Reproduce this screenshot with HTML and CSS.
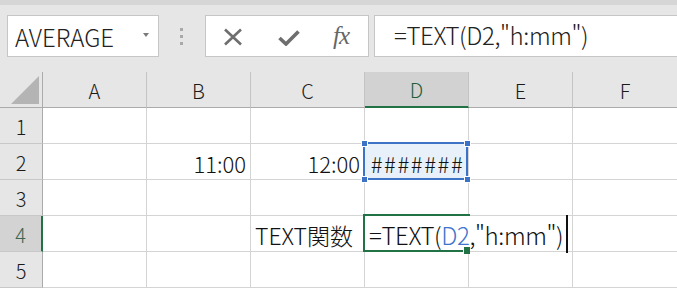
FILE: index.html
```html
<!DOCTYPE html>
<html lang="ja">
<head>
<meta charset="utf-8">
<title>Excel TEXT</title>
<link rel="stylesheet" href="styles.css">
</head>
<body>
<div class="app">
  <div class="topband"></div>
  <div class="toolbar">
    <div class="namebox">
      <span class="name">AVERAGE</span>
      <span class="dd"></span>
    </div>
    <div class="grip"><i></i><i></i><i></i></div>
    <div class="fbtns">
      <svg class="ic-x" width="20" height="18" viewBox="0 0 20 18"><path d="M2 1.5 L18 16.5 M18 1.5 L2 16.5" stroke="#6e6e6e" stroke-width="2.6" fill="none"/></svg>
      <svg class="ic-ok" width="22" height="16" viewBox="0 0 22 16"><path d="M1.5 8 L8 14 L20.5 1.5" stroke="#6e6e6e" stroke-width="3.6" fill="none" stroke-linejoin="miter"/></svg>
      <span class="fx">fx</span>
    </div>
    <div class="finput">=TEXT(D2,"h:mm")</div>
  </div>
  <div class="sheet">
    <div class="corner"><span class="tri"></span></div>
    <div class="ch">A</div>
    <div class="ch">B</div>
    <div class="ch">C</div>
    <div class="ch sel">D</div>
    <div class="ch">E</div>
    <div class="ch last">F</div>

    <div class="rh">1</div>
    <div class="c"></div><div class="c"></div><div class="c"></div><div class="c"></div><div class="c"></div><div class="c last"></div>

    <div class="rh">2</div>
    <div class="c"></div>
    <div class="c num">11:00</div>
    <div class="c num">12:00</div>
    <div class="c ref"><span class="hash">#######</span>
      <div class="refbox">
        <i class="h tl"></i><i class="h tr"></i><i class="h bl"></i><i class="h br"></i>
      </div>
    </div>
    <div class="c"></div><div class="c last"></div>

    <div class="rh">3</div>
    <div class="c"></div><div class="c"></div><div class="c"></div><div class="c"></div><div class="c"></div><div class="c last"></div>

    <div class="rh sel">4</div>
    <div class="c"></div>
    <div class="c"></div>
    <div class="c txt">TEXT関数</div>
    <div class="c active">
      <div class="editor"><span class="etext">=TEXT(<span class="refc">D2</span>,"h:mm")</span><span class="caret"></span></div>
      <div class="frame"><i class="fill"></i></div>
    </div>
    <div class="c"></div><div class="c last"></div>

    <div class="rh">5</div>
    <div class="c"></div><div class="c"></div><div class="c"></div><div class="c"></div><div class="c"></div><div class="c last"></div>
  </div>
</div>
</body>
</html>
```
FILE: styles.css
```css
* { box-sizing: border-box; }
html, body { margin: 0; padding: 0; }
body {
  width: 677px;
  height: 288px;
  overflow: hidden;
  background: #e6e6e6;
  font-family: "Noto Sans CJK JP", "Noto Sans", sans-serif;
  font-weight: 300;
  color: #111;
}
.app { width: 677px; height: 288px; display: flex; flex-direction: column; }
.topband { height: 5px; background: #d6d6d6; flex: none; }
.toolbar {
  height: 67px;
  flex: none;
  display: flex;
  align-items: flex-start;
  padding: 10px 0 0 7px;
}
.namebox {
  width: 152px;
  height: 42px;
  background: #fff;
  border: 1px solid #c6c6c6;
  display: flex;
  align-items: center;
  padding-left: 7px;
  position: relative;
}
.name { font-size: 24px; letter-spacing: 0; color: #222; line-height: 1; padding-top: 1px; }
.dd {
  position: absolute;
  right: 9px;
  top: 17px;
  width: 0; height: 0;
  border-left: 3.5px solid transparent;
  border-right: 3.5px solid transparent;
  border-top: 4px solid #7a7a7a;
}
.grip {
  width: 46px;
  height: 42px;
  display: flex;
  flex-direction: column;
  align-items: center;
  padding-top: 13px;
  gap: 4px;
  padding-right: 1px;
}
.grip i { display: block; width: 3px; height: 3px; background: #a9a9a9; }
.fbtns {
  width: 164px;
  height: 42px;
  background: #fff;
  border: 1px solid #c6c6c6;
  display: flex;
  align-items: center;
  padding-left: 17px;
}
.ic-x { margin-top: 2px; }
.ic-ok { margin-left: 35px; margin-top: 3px; }
.fx {
  margin-left: 33px;
  font-family: "Liberation Serif", "DejaVu Serif", serif;
  font-style: italic;
  font-weight: 400;
  font-size: 25px;
  color: #666;
  letter-spacing: -1px;
  line-height: 1;
  margin-top: -2px;
}
.finput {
  margin-left: 5px;
  flex: 1;
  height: 42px;
  background: #fff;
  border: 1px solid #c6c6c6;
  border-right: none;
  padding-left: 19px;
  font-size: 24px;
  letter-spacing: -0.4px;
  line-height: 38px;
  color: #222;
  white-space: nowrap;
}
.sheet {
  flex: 1;
  display: grid;
  grid-template-columns: 43px 104px 104px 114px 104px 104px 104px;
  grid-template-rows: repeat(6, 36px);
  background: #fff;
}
.corner {
  background: #e6e6e6;
  border-right: 1px solid #ababab;
  border-bottom: 1px solid #ababab;
  position: relative;
}
.tri {
  position: absolute;
  right: 3px;
  bottom: 3px;
  width: 28px;
  height: 28px;
  background: #b4b4b4;
  clip-path: polygon(100% 0, 100% 100%, 0 100%);
}
.ch {
  background: #e6e6e6;
  border-right: 1px solid #c4c4c4;
  border-bottom: 1px solid #ababab;
  display: flex;
  align-items: center;
  justify-content: center;
  font-size: 20px;
  color: #1a1a1a;
  padding-top: 1px;
}
.ch.last { border-right: none; }
.ch.sel {
  background: #d2d2d2;
  border-bottom: 2px solid #217346;
  color: #1e5e3a;
}
.rh {
  background: #e6e6e6;
  border-right: 1px solid #ababab;
  border-bottom: 1px solid #c8c8c8;
  display: flex;
  align-items: center;
  justify-content: center;
  font-size: 20px;
  color: #1a1a1a;
  padding-top: 1px;
}
.rh.sel {
  background: #d3d3d3;
  border-right: 2px solid #217346;
  color: #3d6650;
}
.c {
  border-right: 1px solid #d4d4d4;
  border-bottom: 1px solid #d4d4d4;
  font-size: 22px;
  white-space: nowrap;
  display: flex;
  align-items: center;
}
.c.last { border-right: none; }
.num { justify-content: flex-end; padding-right: 4px; padding-top: 2px; }
.txt { padding-left: 4px; font-size: 23px; padding-top: 2px; }
.ref { position: relative; background: #e8f0fa; justify-content: center; }
.hash { font-size: 22px; letter-spacing: 1.6px; padding-top: 3px; padding-left: 2px; position: relative; z-index: 1; }
.refbox {
  position: absolute;
  left: -2px;
  top: -2px;
  right: 0;
  bottom: -1px;
  border: 2px solid #3c73c6;
  z-index: 2;
}
.h {
  position: absolute;
  width: 7px;
  height: 7px;
  background: #3c73c6;
  border: 1px solid #fff;
}
.h.tl { left: -4px; top: -4px; }
.h.tr { right: -5px; top: -4px; }
.h.bl { left: -4px; bottom: -5px; }
.h.br { right: -5px; bottom: -5px; }
.active { position: relative; overflow: visible; }
.editor {
  position: absolute;
  left: 0;
  top: 0;
  bottom: 0;
  width: 206px;
  background: #fff;
  z-index: 3;
  font-size: 24px;
  letter-spacing: -0.4px;
  display: flex;
  align-items: center;
  padding-left: 4px;
  padding-top: 2px;
  color: #111;
}
.etext { flex: none; }
.refc { color: #3f75cc; }
.caret {
  display: block;
  flex: none;
  width: 2px;
  height: 38px;
  background: #111;
  margin-left: 3px;
  margin-top: -1px;
}
.frame {
  position: absolute;
  left: -2px;
  top: -2px;
  width: 107px;
  bottom: -1px;
  border: 2px solid #217346;
  border-right: none;
  z-index: 4;
}
.fill {
  position: absolute;
  right: 0;
  bottom: -4px;
  width: 7px;
  height: 7px;
  background: #217346;
  border-left: 1px solid #fff;
}
```
